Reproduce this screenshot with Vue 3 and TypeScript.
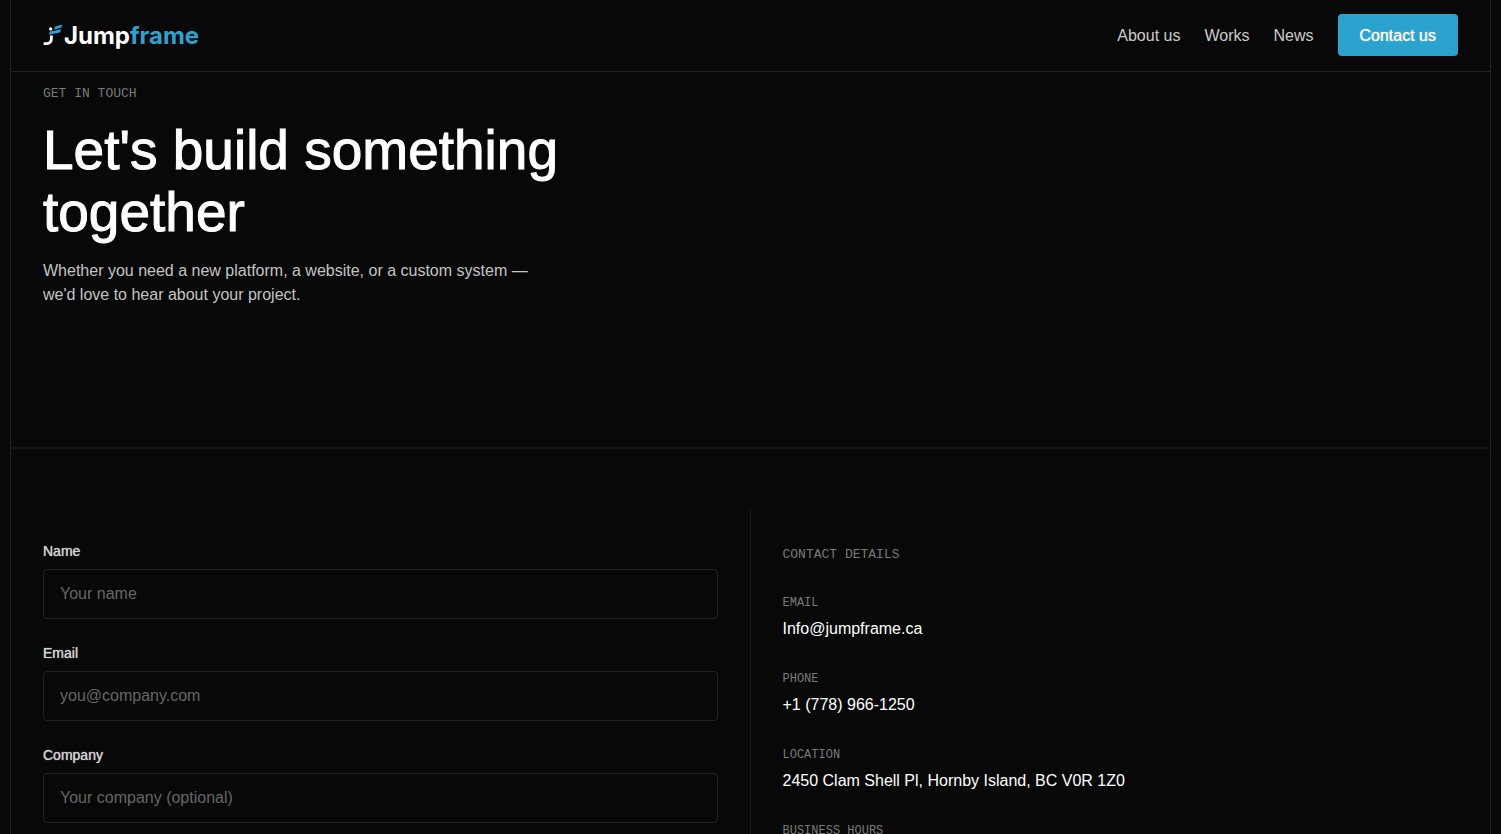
<script setup lang="ts">
interface Field {
  id: string
  label: string
  type: string
  placeholder: string
}

interface Detail {
  label: string
  value?: string
  href?: string
}

const links: string[] = ['About us', 'Works', 'News']

const fields: Field[] = [
  { id: 'name', label: 'Name', type: 'text', placeholder: 'Your name' },
  { id: 'email', label: 'Email', type: 'email', placeholder: 'you@company.com' },
  { id: 'company', label: 'Company', type: 'text', placeholder: 'Your company (optional)' },
]

const details: Detail[] = [
  { label: 'EMAIL', value: 'Info@jumpframe.ca', href: 'mailto:Info@jumpframe.ca' },
  { label: 'PHONE', value: '+1 (778) 966-1250', href: 'tel:+17789661250' },
  { label: 'LOCATION', value: '2450 Clam Shell Pl, Hornby Island, BC V0R 1Z0' },
  { label: 'BUSINESS HOURS' },
]
</script>

<template>
  <div class="page">
    <div class="frame">
      <header class="header">
        <a class="logo" href="#">
          <svg class="mark" viewBox="0 0 20 22" aria-hidden="true">
            <path d="M8.4 11.4V14.6Q8.4 19.6 3.6 19.6H0.6" fill="none" stroke="#fff" stroke-width="2.8" />
            <circle cx="7.7" cy="4.9" r="1.7" fill="#fff" />
            <path d="M12.2 2.4L19.6 0.4L18.2 3.8L10.8 5.6Z" fill="#2ca3cf" />
            <path d="M7 7.6L18.4 5.2L16.8 8.5L5.8 10.8Z" fill="#2ca3cf" />
          </svg>
          <span class="wordmark">Jump<span class="accent">frame</span></span>
        </a>
        <nav class="nav">
          <a v-for="link in links" :key="link" class="link" href="#">{{ link }}</a>
          <a class="cta" href="#contact">Contact us</a>
        </nav>
      </header>

      <main>
        <section class="hero">
          <p class="mono eyebrow">GET IN TOUCH</p>
          <h1 class="title">Let's build something together</h1>
          <p class="lead">Whether you need a new platform, a website, or a custom system — we'd love to hear about your project.</p>
        </section>

        <section id="contact" class="contact">
          <form class="form">
            <div v-for="field in fields" :key="field.id" class="field">
              <label class="label" :for="field.id">{{ field.label }}</label>
              <input :id="field.id" class="input" :type="field.type" :placeholder="field.placeholder" />
            </div>
          </form>
          <div class="details">
            <h2 class="mono details-title">CONTACT DETAILS</h2>
            <dl class="list">
              <div v-for="item in details" :key="item.label" class="item">
                <dt class="mono small">{{ item.label }}</dt>
                <dd v-if="item.value" class="value">
                  <a v-if="item.href" class="value-link" :href="item.href">{{ item.value }}</a>
                  <template v-else>{{ item.value }}</template>
                </dd>
              </div>
            </dl>
          </div>
        </section>
      </main>
    </div>
  </div>
</template>

<style>
body {
  background: #080808;
}
</style>

<style scoped>
.page,
.page * {
  box-sizing: border-box;
}

.page {
  height: 100vh;
  overflow: hidden;
  padding: 0 10px;
  background: #080808;
  color: #fff;
  font-family: "Liberation Sans", Arial, sans-serif;
  font-size: 16px;
  line-height: 24px;
}

.frame {
  display: flex;
  flex-direction: column;
  min-height: 100%;
  border: solid #222;
  border-width: 0 1px;
}

.header {
  display: flex;
  align-items: center;
  justify-content: space-between;
  padding: 14px 32px 15px;
  border-bottom: 1px solid #222;
}

.logo {
  display: flex;
  align-items: center;
  gap: 1px;
  color: #fff;
  text-decoration: none;
}

.mark {
  width: 20px;
  height: 22px;
}

.wordmark {
  padding-top: 2px;
  font-family: Inter, sans-serif;
  font-size: 24px;
  font-weight: 700;
  line-height: 32px;
}

.accent {
  color: #2ca3cf;
}

.nav {
  display: flex;
  align-items: center;
  gap: 24px;
}

.link {
  padding-top: 2px;
  color: #ccc;
  text-decoration: none;
}

.cta {
  padding: 10px 22px 8px;
  border-radius: 4px;
  background: #2ca3cf;
  color: #fff;
  text-decoration: none;
  text-shadow: 0 0 1px #fff;
}

.hero {
  padding: 12px 32px 140px;
  border-bottom: 2px solid #151515;
}

.mono {
  margin: 0;
  color: #7a7a7a;
  font-family: "Liberation Mono", monospace;
  font-weight: 400;
}

.eyebrow {
  font-size: 13px;
  line-height: 20px;
}

.title {
  max-width: 576px;
  margin: 15px 0 16px;
  font-size: 55px;
  font-weight: 400;
  line-height: 62px;
  -webkit-text-stroke: 1px #fff;
}

.lead {
  max-width: 512px;
  margin: 0;
  color: #c4c4c4;
}

.contact {
  display: grid;
  grid-template-columns: 1fr 1fr;
  padding-top: 60px;
}

.form {
  display: flex;
  flex-direction: column;
  gap: 24px;
  padding: 32px;
  border-right: 1px solid #1a1a1a;
}

.field {
  display: flex;
  flex-direction: column;
  gap: 8px;
}

.label {
  color: #d4d4d4;
  font-size: 14px;
  line-height: 20px;
  text-shadow: 0 0 1px #d4d4d4;
}

.input {
  width: 100%;
  height: 50px;
  padding: 0 16px;
  border: 1px solid #222;
  border-radius: 4px;
  background: transparent;
  color: #fff;
  font: inherit;
}

.input::placeholder {
  color: #666;
  opacity: 1;
}

.details {
  padding: 34px 32px;
}

.details-title {
  margin-bottom: 26px;
  font-size: 13px;
  line-height: 24px;
}

.list {
  display: flex;
  flex-direction: column;
  gap: 28px;
  margin: 0;
}

.item {
  display: flex;
  flex-direction: column;
  gap: 4px;
}

.small {
  font-size: 12px;
  line-height: 20px;
}

.value {
  margin: 0;
}

.value-link {
  color: inherit;
  text-decoration: none;
}
</style>
